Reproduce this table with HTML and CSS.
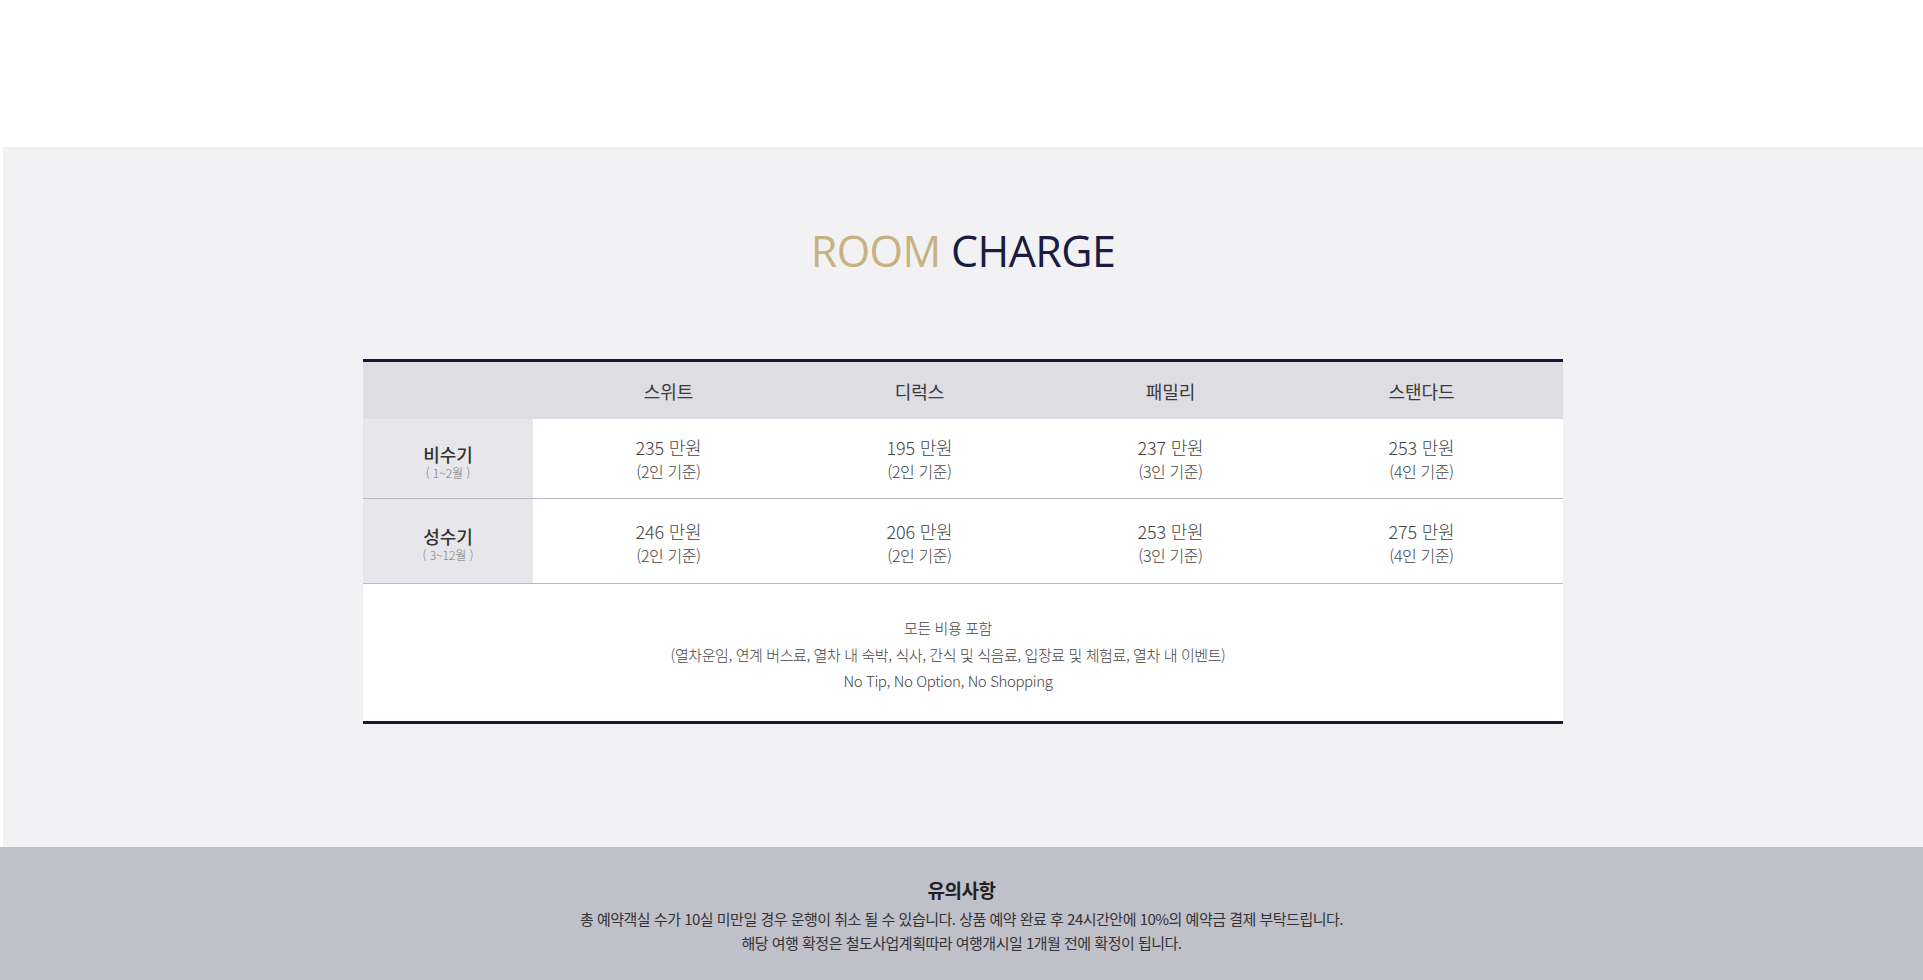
FILE: index.html
```html
<!DOCTYPE html>
<html lang="ko">
<head>
<meta charset="utf-8">
<title>Room Charge</title>
<link rel="stylesheet" href="styles.css">
</head>
<body>
<div class="top-space"></div>
<section class="charge">
  <h2 class="charge-title"><span class="gold">ROOM</span> <span class="navy">CHARGE</span></h2>
  <div class="price-table">
    <div class="row row-head">
      <div class="label-cell"></div>
      <div class="cells">
        <div class="cell">스위트</div>
        <div class="cell">디럭스</div>
        <div class="cell">패밀리</div>
        <div class="cell">스탠다드</div>
      </div>
    </div>
    <div class="row row-off">
      <div class="label-cell">
        <div class="season">비수기</div>
        <div class="months">( 1~2월 )</div>
      </div>
      <div class="cells">
        <div class="cell"><div class="price">235 만원</div><div class="base">(2인 기준)</div></div>
        <div class="cell"><div class="price">195 만원</div><div class="base">(2인 기준)</div></div>
        <div class="cell"><div class="price">237 만원</div><div class="base">(3인 기준)</div></div>
        <div class="cell"><div class="price">253 만원</div><div class="base">(4인 기준)</div></div>
      </div>
    </div>
    <div class="row row-peak">
      <div class="label-cell">
        <div class="season">성수기</div>
        <div class="months">( 3~12월 )</div>
      </div>
      <div class="cells">
        <div class="cell"><div class="price">246 만원</div><div class="base">(2인 기준)</div></div>
        <div class="cell"><div class="price">206 만원</div><div class="base">(2인 기준)</div></div>
        <div class="cell"><div class="price">253 만원</div><div class="base">(3인 기준)</div></div>
        <div class="cell"><div class="price">275 만원</div><div class="base">(4인 기준)</div></div>
      </div>
    </div>
    <div class="notes">
      <p>모든 비용 포함</p>
      <p>(열차운임, 연계 버스료, 열차 내 숙박, 식사, 간식 및 식음료, 입장료 및 체험료, 열차 내 이벤트)</p>
      <p>No Tip, No Option, No Shopping</p>
    </div>
  </div>
</section>
<footer class="notice">
  <h3 class="notice-title">유의사항</h3>
  <p class="notice-first">총 예약객실 수가 10실 미만일 경우 운행이 취소 될 수 있습니다. 상품 예약 완료 후 24시간안에 10%의 예약금 결제 부탁드립니다.</p>
  <p>해당 여행 확정은 철도사업계획따라 여행개시일 1개월 전에 확정이 됩니다.</p>
</footer>
</body>
</html>
```

FILE: styles.css
```css
* { box-sizing: border-box; }
html, body { margin: 0; padding: 0; }
body {
  font-family: "Noto Sans CJK KR", "Noto Sans", sans-serif;
  color: #444;
  background: #fff;
  overflow: hidden;
}
.top-space { height: 147px; }
.charge {
  margin-left: 3px;
  height: 700px;
  background: #f2f2f4;
  padding-top: 74px;
}
.charge-title {
  margin: 0;
  text-align: center;
  font-family: "Open Sans", "Noto Sans", sans-serif;
  font-weight: 400;
  font-size: 43px;
  line-height: 60px;
  letter-spacing: -0.6px;
}
.gold { color: #c8b283; }
.navy { color: #1b1b3f; }
.price-table {
  width: 1200px;
  margin: 78px auto 0;
  border-top: 3px solid #17173a;
  border-bottom: 3px solid #17173a;
  background: #fff;
}
.row { display: flex; }
.label-cell {
  width: 170px;
  flex: none;
  background: #e7e7eb;
  display: flex;
  flex-direction: column;
  align-items: center;
  justify-content: center;
}
.cells {
  flex: 1;
  display: grid;
  grid-template-columns: repeat(4, 1fr);
  padding: 0 16px 0 10px;
  align-items: center;
}
.cell { text-align: center; }
.row-head { background: #dddde3; height: 57px; }
.row-head .label-cell { background: transparent; }
.row-head .cell {
  font-size: 18px;
  color: #3a3a3a;
  font-weight: 400;
}
.row-off { height: 80px; border-bottom: 1px solid #b9b9c4; }
.row-peak { height: 85px; border-bottom: 1px solid #b9b9c4; }
.row-peak .cells { padding-top: 3px; }
.season {
  font-size: 18px;
  line-height: 22px;
  color: #333;
  font-weight: 500;
}
.months {
  font-size: 12px;
  line-height: 16px;
  color: #777;
  font-weight: 300;
}
.row-off .label-cell { padding-top: 6px; }
.row-peak .label-cell { padding-top: 5px; }
.price {
  font-size: 18px;
  line-height: 24px;
  color: #444;
  font-weight: 300;
  letter-spacing: -0.2px;
}
.base {
  font-size: 16px;
  line-height: 24px;
  color: #444;
  font-weight: 300;
  letter-spacing: -0.4px;
}
.notes {
  padding: 31px 30px 26px 0;
  text-align: center;
}
.notes p {
  margin: 0;
  font-size: 15px;
  line-height: 26.5px;
  color: #444;
  font-weight: 300;
  letter-spacing: -0.4px;
}
.notice {
  height: 133px;
  background: #c0c0ca;
  padding-top: 29px;
  text-align: center;
}
.notice-title {
  margin: 0;
  font-size: 19px;
  line-height: 28px;
  font-weight: 700;
  color: #222;
  letter-spacing: -0.5px;
}
.notice p {
  margin: 0;
  font-size: 15px;
  line-height: 24px;
  color: #333;
  font-weight: 400;
  letter-spacing: -0.5px;
}
.notice .notice-first { margin-top: 3px; }
```
